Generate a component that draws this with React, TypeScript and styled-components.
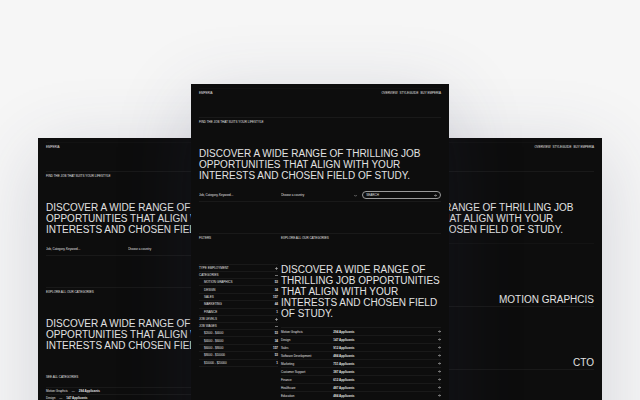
import React from "react";
import styled, { createGlobalStyle, css } from "styled-components";

const ink = "#e2e2e2";
const night = "#0d0d0d";
const hairline = "#191919";

const GlobalStyle = createGlobalStyle`
  *, *::before, *::after { box-sizing: border-box; }
  body {
    margin: 0;
    background: #f6f6f6;
    font-family: "Liberation Sans", Arial, sans-serif;
  }
  h1, h2, h3, p, ul { margin: 0; padding: 0; font-weight: 400; }
  ul { list-style: none; }
  a { color: inherit; text-decoration: none; }
  button, input, select {
    margin: 0;
    padding: 0;
    border: 0;
    border-radius: 0;
    background: none;
    color: inherit;
    font: inherit;
    appearance: none;
    outline: none;
  }
`;

const Stage = styled.main`
  display: grid;
  grid-template-columns: 38fr 153fr 105fr 48fr 105fr 153fr 38fr;
  grid-template-rows: minmax(0, 1fr);
  height: 100vh;
  padding-top: 84px;
  overflow: hidden;
`;

type Slot = "left" | "center" | "right";

const slots = {
  left: css`
    grid-column: 2 / 4;
    margin-top: 54px;
  `,
  center: css`
    grid-column: 3 / 6;
    z-index: 1;
  `,
  right: css`
    grid-column: 5 / 7;
    margin-top: 54px;
  `,
};

const Panel = styled.article<{ $slot: Slot }>`
  ${(p) => slots[p.$slot]}
  grid-row: 1;
  min-width: 0;
  height: 400px;
  padding: 4px 8px 0;
  background: ${night};
  color: ${ink};
  box-shadow: 0 16px 72px rgba(52, 58, 98, 0.19);
`;

const small = css`
  font-size: 3px;
  line-height: 4px;
`;

const Header = styled.header`
  display: flex;
  justify-content: space-between;
  height: 29px;
  padding-top: 2px;
  border-top: 1px solid #121212;
  ${small}
`;

const Nav = styled.nav`
  display: flex;
  gap: 2px;
`;

const Hero = styled.section`
  padding-top: 2px;
  border-top: 1px solid ${hairline};
`;

const Label = styled.p`
  ${small}
`;

const Title = styled.h1`
  margin-top: 24px;
  font-size: 10px;
  line-height: 11px;
  white-space: nowrap;
`;

const SearchForm = styled.form`
  display: grid;
  grid-template-columns: repeat(3, minmax(0, 1fr));
  gap: 3px;
  align-items: center;
  height: 21px;
  padding-top: 8px;
  border-bottom: 1px solid ${hairline};
  ${small}
`;

const SearchInput = styled.input`
  width: 100%;
  height: 4px;
  &::placeholder { color: ${ink}; opacity: 1; }
`;

const SelectWrap = styled.div`
  display: flex;
  align-items: center;
  padding-right: 2px;
`;

const Select = styled.select`
  flex: 1;
  min-width: 0;
  height: 4px;
`;

const SearchButton = styled.button`
  display: flex;
  align-items: center;
  justify-content: space-between;
  height: 8px;
  padding: 0 3px;
  border: 1px solid #9a9a9a;
  border-radius: 4px;
`;

const Section = styled.section`
  margin-top: 31px;
  padding-top: 2px;
  border-top: 1px solid ${hairline};
`;

const Split = styled(Section)`
  display: grid;
  grid-template-columns: minmax(0, 1fr) minmax(0, 2fr);
  column-gap: 2px;
`;

const Filters = styled.div`
  margin-top: 24px;
  margin-right: 1px;
`;

const FilterHead = styled.h3`
  display: flex;
  align-items: center;
  justify-content: space-between;
  height: 7px;
  border-top: 1px solid ${hairline};
  ${small}
`;

const FilterList = styled.ul`
  display: grid;
  grid-auto-rows: 1fr;
  height: 37px;
`;

const FilterItem = styled.li`
  display: flex;
  align-items: center;
  justify-content: space-between;
  padding-left: 5px;
  border-top: 1px solid ${hairline};
  ${small}
`;

const FilterEnd = styled.div`
  border-top: 1px solid ${hairline};
`;

const Categories = styled.ul`
  margin-top: 8px;
`;

const Category = styled.li`
  display: grid;
  grid-template-columns: 1fr 2fr auto;
  align-items: center;
  height: 8px;
  border-top: 1px solid ${hairline};
  ${small}
`;

const Teaser = styled.div`
  margin-top: 24px;
`;

const TeaserRow = styled.p`
  display: flex;
  gap: 4px;
  height: 7px;
  padding-top: 1px;
  border-top: 1px solid ${hairline};
  ${small}
`;

const TeaserList = styled.div`
  margin-top: 8px;
`;

const Roles = styled.ul`
  margin-top: 8px;
  border-top: 1px solid #131313;
`;

const Role = styled.li`
  display: flex;
  align-items: flex-end;
  justify-content: flex-end;
  height: 63px;
  padding-bottom: 1px;
  border-bottom: 1px solid ${hairline};
  font-size: 10px;
  line-height: 11px;
`;

const Glyph = styled.svg`
  display: block;
  flex: none;
  width: 3px;
  height: 3px;
  fill: none;
  stroke: #b8b8b8;
  stroke-width: 1.6;
`;

const Arrow = () => (
  <Glyph viewBox="0 0 8 8" aria-hidden="true">
    <path d="M0 4h7M4 1l3 3-3 3" />
  </Glyph>
);

const Chevron = () => (
  <Glyph viewBox="0 0 8 8" aria-hidden="true">
    <path d="M1 3l3 3 3-3" />
  </Glyph>
);

const Sign = ({ open = false }: { open?: boolean }) => (
  <Glyph viewBox="0 0 8 8" aria-hidden="true">
    <path d={open ? "M0 4h8" : "M0 4h8M4 0v8"} />
  </Glyph>
);

const categoryFilters: [string, number][] = [
  ["MOTION GRAPHICS", 53],
  ["DESIGN", 34],
  ["SALES", 157],
  ["MARKETING", 44],
  ["FINANCE", 1],
];

const wageFilters: [string, number][] = [
  ["$2000 - $4000", 53],
  ["$4000 - $6000", 34],
  ["$6000 - $8000", 157],
  ["$8000 - $10000", 53],
  ["$10000 - $20000", 1],
];

const categories: [string, number][] = [
  ["Motion Graphcis", 294],
  ["Design", 147],
  ["Sales", 912],
  ["Software Development", 484],
  ["Marketing", 751],
  ["Customer Support", 387],
  ["Finance", 612],
  ["Healthcare", 487],
  ["Education", 484],
];

const TopBar = () => (
  <Header>
    <a href="#home">EMPERIA</a>
    <Nav>
      <a href="#overview">OVERVIEW</a>
      <a href="#styleguide">STYLEGUIDE</a>
      <a href="#buy">BUY EMPERIA</a>
    </Nav>
  </Header>
);

const Discover = () => (
  <>
    DISCOVER A WIDE RANGE OF THRILLING JOB
    <br />
    OPPORTUNITIES THAT ALIGN WITH YOUR
    <br />
    INTERESTS AND CHOSEN FIELD OF STUDY.
  </>
);

const Intro = ({ label = "\u00a0" }: { label?: string }) => (
  <Hero>
    <Label>{label}</Label>
    <Title>
      <Discover />
    </Title>
  </Hero>
);

const Search = () => (
  <SearchForm onSubmit={(e) => e.preventDefault()}>
    <SearchInput aria-label="Keyword" placeholder="Job, Category, Keyword..." />
    <SelectWrap>
      <Select aria-label="Country" defaultValue="">
        <option value="">Choose a country</option>
      </Select>
      <Chevron />
    </SelectWrap>
    <SearchButton type="submit">
      SEARCH <Arrow />
    </SearchButton>
  </SearchForm>
);

const FilterGroup = ({ items }: { items: [string, number][] }) => (
  <FilterList>
    {items.map(([name, count]) => (
      <FilterItem key={name}>
        <span>{name}</span>
        <b>{count}</b>
      </FilterItem>
    ))}
  </FilterList>
);

const tagline = "FIND THE JOB THAT SUITS YOUR LIFESTYLE";

export default function App() {
  return (
    <>
      <GlobalStyle />
      <Stage>
        <Panel $slot="left">
          <TopBar />
          <Intro label={tagline} />
          <Search />
          <Section>
            <Label>EXPLORE ALL OUR CATEGORIES</Label>
            <Title as="h2">
              <Discover />
            </Title>
            <Teaser>
              <Label>SEE ALL CATEGORIES</Label>
              <TeaserList>
                {categories.slice(0, 2).map(([name, count]) => (
                  <TeaserRow key={name}>
                    <span>{name}</span>
                    <span>—</span>
                    <b>{count} Applicants</b>
                  </TeaserRow>
                ))}
              </TeaserList>
            </Teaser>
          </Section>
        </Panel>

        <Panel $slot="right">
          <TopBar />
          <Intro />
          <Roles>
            <Role>MOTION GRAPHCIS</Role>
            <Role>CTO</Role>
          </Roles>
        </Panel>

        <Panel $slot="center">
          <TopBar />
          <Intro label={tagline} />
          <Search />
          <Split>
            <div>
              <Label>FILTERS</Label>
              <Filters>
                <FilterHead>
                  TYPE EMPLOYMENT <Sign />
                </FilterHead>
                <FilterHead>
                  CATEGORIES <Sign open />
                </FilterHead>
                <FilterGroup items={categoryFilters} />
                <FilterHead>
                  JOB LEVELS <Sign />
                </FilterHead>
                <FilterHead>
                  JOB WAGES <Sign open />
                </FilterHead>
                <FilterGroup items={wageFilters} />
                <FilterEnd />
              </Filters>
            </div>
            <div>
              <Label>EXPLORE ALL OUR CATEGORIES</Label>
              <Title as="h2">
                DISCOVER A WIDE RANGE OF
                <br />
                THRILLING JOB OPPORTUNITIES
                <br />
                THAT ALIGN WITH YOUR
                <br />
                INTERESTS AND CHOSEN FIELD
                <br />
                OF STUDY.
              </Title>
              <Categories>
                {categories.map(([name, count]) => (
                  <Category key={name}>
                    <span>{name}</span>
                    <b>{count} Applicants</b>
                    <Arrow />
                  </Category>
                ))}
              </Categories>
            </div>
          </Split>
        </Panel>
      </Stage>
    </>
  );
}
